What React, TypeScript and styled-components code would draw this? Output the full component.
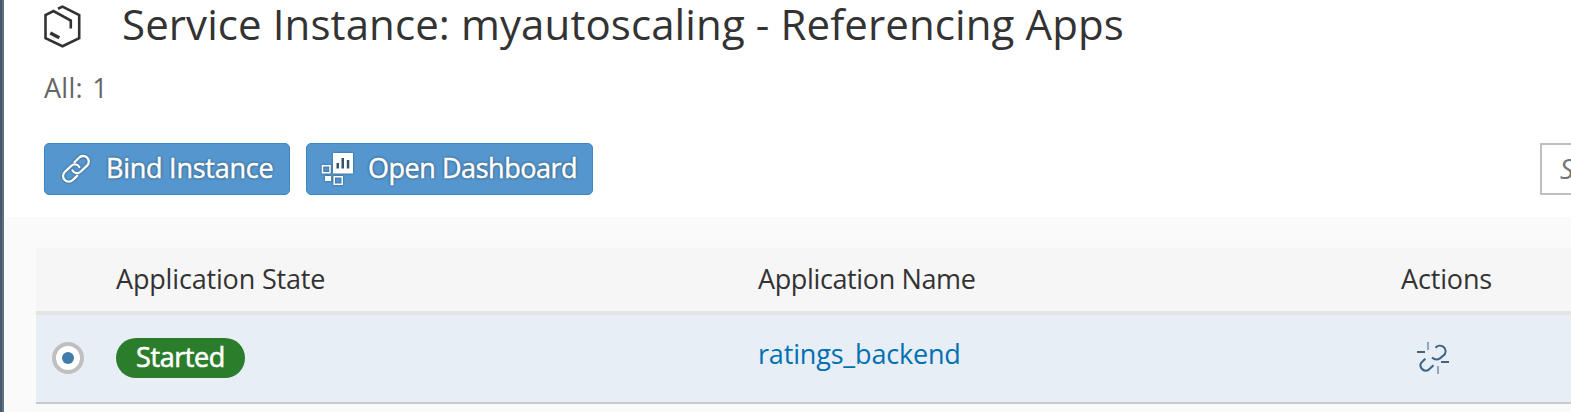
import React from 'react';
import styled, { createGlobalStyle } from 'styled-components';

const GlobalStyle = createGlobalStyle`
  *, *::before, *::after { box-sizing: border-box; }
  body {
    margin: 0;
    overflow: hidden;
    background: #fafafa;
    color: #333;
    font-family: "Open Sans", sans-serif;
    font-size: 27px;
  }
`;

const Page = styled.div`
  width: 100vw;
  height: 412px;
  overflow: hidden;
  padding-left: 4px;
  background: linear-gradient(to right, #46596b 2px, #5d7183 2px, #5d7183 4px, #fafafa 4px);
`;

const Header = styled.header`
  height: 217px;
  padding-left: 40px;
  background: #fff;
  overflow: hidden;
`;

const TitleRow = styled.div`
  display: flex;
  align-items: flex-start;
  height: 66px;
`;

const TitleIcon = styled.svg`
  width: 38px;
  height: 52px;
  margin-right: 40px;
  flex: none;
`;

const Text = styled.span<{ $spacing?: number; $word?: number }>`
  letter-spacing: ${(p) => p.$spacing ?? 0}px;
  word-spacing: ${(p) => p.$word ?? 0}px;
  white-space: nowrap;
`;

const Title = styled.h1`
  margin: 0;
  font-size: 42px;
  font-weight: 400;
  line-height: 48px;
`;

const Count = styled.div`
  height: 77px;
  padding-top: 4px;
  color: #666;
  line-height: 36px;
`;

const Toolbar = styled.div`
  display: flex;
  gap: 16px;
`;

const Button = styled.button<{ $width: number }>`
  display: flex;
  align-items: center;
  width: ${(p) => p.$width}px;
  height: 52px;
  padding: 0 0 0 14px;
  border: 1px solid #3d86c4;
  border-radius: 5px;
  background: #5496cd;
  color: #fff;
  font: inherit;
  -webkit-text-stroke: 0.5px #fff;
  text-shadow: 0 0 3px rgba(0, 0, 0, 0.65);

  ${Text} {
    padding-bottom: 3px;
  }
`;

const ButtonIcon = styled.svg`
  width: 34px;
  height: 34px;
  margin-right: 13px;
  flex: none;
  filter: drop-shadow(0 0 1px rgba(0, 0, 0, 0.45));
`;

const Search = styled.div`
  width: 300px;
  height: 52px;
  margin-left: auto;
  margin-right: -269px;
  padding-left: 18px;
  border: 2px solid #bfbfbf;
  background: #fff;
  color: #757575;
  font-style: italic;
  line-height: 47px;
  flex: none;
`;

const Table = styled.div`
  margin: 31px 0 0 32px;
`;

const Row = styled.div`
  display: grid;
  grid-template-columns: 80px 642px 643px 1fr;
`;

const HeadRow = styled(Row)`
  height: 67px;
  border-bottom: 4px solid #e4e4e4;
  background: #f6f6f6;
  line-height: 61px;
`;

const BodyRow = styled(Row)`
  height: 89px;
  align-items: center;
  padding-bottom: 1px;
  border-bottom: 2px solid #c5cbd1;
  background: #e8eef6;
`;

const Radio = styled.span`
  display: grid;
  place-items: center;
  width: 32px;
  height: 32px;
  margin-left: 16px;
  border: 4px solid #bfbfbf;
  border-radius: 50%;
  background: #fff;

  &::after {
    content: "";
    width: 12px;
    height: 12px;
    border-radius: 50%;
    background: #427cac;
  }
`;

const Badge = styled.span`
  display: inline-flex;
  justify-content: center;
  justify-self: start;
  width: 129px;
  height: 40px;
  border-radius: 20px;
  background: #2b7c2b;
  color: #fff;
  -webkit-text-stroke: 0.6px #fff;
  line-height: 38px;
`;

const AppLink = styled.a`
  margin-top: -8px;
  color: #0070b1;
  line-height: 36px;
`;

const UnlinkIcon = styled.svg`
  width: 34px;
  height: 34px;
  margin-left: 15px;
`;

export default function App() {
  return (
    <>
      <GlobalStyle />
      <Page>
        <Header>
          <TitleRow>
            <TitleIcon viewBox="44 0 38 52" fill="none" stroke="#333" strokeWidth="2.6">
              <path d="M58 8.7 62.5 6.6 79.2 15V38.2L62.5 46.2 45.5 38.2V15L53.5 11 70.8 20.5V28.5" />
              <path d="M50.3 33 59.3 37.7" strokeWidth="3.4" />
            </TitleIcon>
            <Title>
              <Text $spacing={0.1}>Service Instance: myautoscaling - Referencing Apps</Text>
            </Title>
          </TitleRow>
          <Count>
            <Text $spacing={0.3} $word={2}>All: 1</Text>
          </Count>
          <Toolbar>
            <Button $width={246}>
              <ButtonIcon viewBox="59 152 34 34" fill="none" stroke="#fff" strokeWidth="2.3" strokeLinecap="round">
                <path d="M74.5 162.2 79 157.800A5.400 5.400 0 0 1 87.300 165.400L80.800 171.500A5.200 5.200 0 0 1 72.500 170.500" />
                <path d="M79.300 167A5.200 5.200 0 0 0 71.200 165.900L64.700 172A5.400 5.400 0 0 0 72.800 180L77.300 175.600" />
              </ButtonIcon>
              <Text $spacing={-0.25}>Bind Instance</Text>
            </Button>
            <Button $width={287}>
              <ButtonIcon viewBox="321 152 34 34">
                <path fill="#fff" d="M333 153h20v20.500H333zM325 176h6v5h-6z" />
                <path fill="#36536e" d="M336.500 163h2.500v5.500h-2.500zM341.500 158h2.500v10.500h-2.500zM346.800 160h2.500v8.500h-2.500z" />
                <path fill="none" stroke="#fff" strokeWidth="1.5" d="M322.500 165.700h7.500v7h-7.500zM334.200 176.700h8v7.500h-8z" />
              </ButtonIcon>
              <Text $spacing={-0.46}>Open Dashboard</Text>
            </Button>
            <Search>Search</Search>
          </Toolbar>
        </Header>
        <Table>
          <HeadRow>
            <span />
            <Text $spacing={-0.17}>Application State</Text>
            <Text $spacing={-0.37}>Application Name</Text>
            <Text $spacing={-0.15}>Actions</Text>
          </HeadRow>
          <BodyRow>
            <Radio />
            <Badge>
              <Text $spacing={-0.4}>Started</Text>
            </Badge>
            <AppLink>
              <Text $spacing={-0.17}>ratings_backend</Text>
            </AppLink>
            <UnlinkIcon viewBox="1416 341 34 34" fill="none" stroke="#406584" strokeWidth="2.1">
              <path d="M1435.500 347.700A5.700 5.700 0 0 1 1444.800 354.200L1440 358.300Q1436 361 1432 357.500" />
              <path d="M1425.300 358.800 1421 363A5.400 5.400 0 0 0 1428.400 370L1433.500 365.200" />
              <path d="M1417 352H1425M1441 362H1449" />
              <path stroke="#93a9bc" d="M1428 342V350M1438 366V374" />
            </UnlinkIcon>
          </BodyRow>
        </Table>
      </Page>
    </>
  );
}
